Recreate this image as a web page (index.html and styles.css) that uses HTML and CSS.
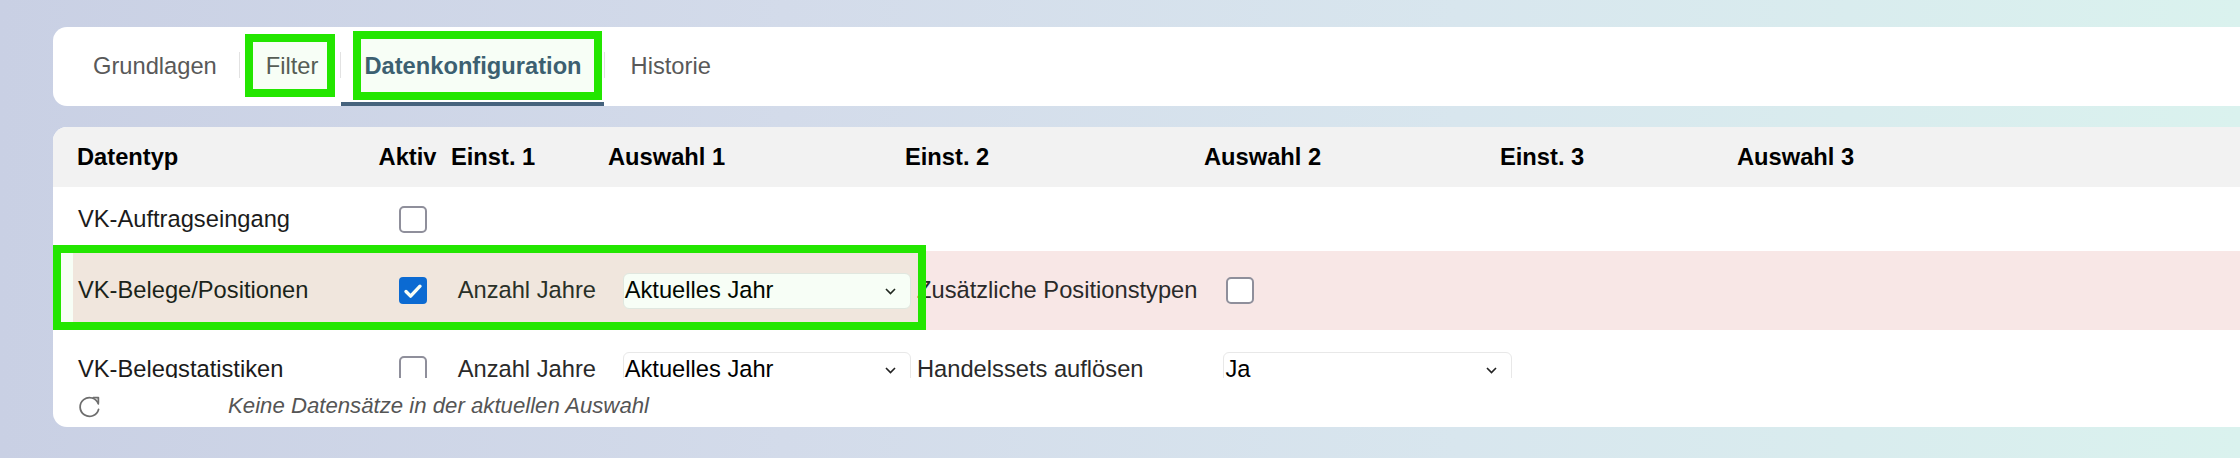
FILE: index.html
```html
<!DOCTYPE html>
<html lang="de">
<head>
<meta charset="utf-8">
<title>Datenkonfiguration</title>
<link rel="stylesheet" href="styles.css">
</head>
<body>
<div class="page">
  <div class="tabs-card">
    <div class="tab">Grundlagen</div>
    <div class="sep"></div>
    <div class="tab">Filter</div>
    <div class="sep"></div>
    <div class="tab active">Datenkonfiguration</div>
    <div class="sep"></div>
    <div class="tab">Historie</div>
    <div class="mark mark-filter"></div>
    <div class="mark mark-tab"></div>
  </div>

  <div class="table-card">
    <div class="thead">
      <div class="th">Datentyp</div>
      <div class="th">Aktiv</div>
      <div class="th">Einst. 1</div>
      <div class="th">Auswahl 1</div>
      <div class="th">Einst. 2</div>
      <div class="th">Auswahl 2</div>
      <div class="th">Einst. 3</div>
      <div class="th">Auswahl 3</div>
    </div>
    <div class="tbody">
      <div class="row row-short">
        <div class="cell name">VK-Auftragseingang</div>
        <div class="cell"><span class="cb"></span></div>
      </div>
      <div class="row row-hl">
        <div class="cell name">VK-Belege/Positionen</div>
        <div class="cell"><span class="cb checked"><svg viewBox="0 0 28 28" width="28" height="28"><path d="M7 14.5l4.6 4.6L21 9.2" fill="none" stroke="#fff" stroke-width="3.4" stroke-linecap="round" stroke-linejoin="round"/></svg></span></div>
        <div class="cell label">Anzahl Jahre</div>
        <div class="cell"><div class="select"><span>Aktuelles Jahr</span><svg class="chev" viewBox="0 0 11 7" width="11" height="7"><polyline points="1,1 5.5,5.6 10,1" fill="none" stroke="#222" stroke-width="1.6"/></svg></div></div>
        <div class="cell label">Zusätzliche Positionstypen</div>
        <div class="cell"><span class="cb cb-offset"></span></div>
      </div>
      <div class="row">
        <div class="cell name">VK-Belegstatistiken</div>
        <div class="cell"><span class="cb"></span></div>
        <div class="cell label">Anzahl Jahre</div>
        <div class="cell"><div class="select"><span>Aktuelles Jahr</span><svg class="chev" viewBox="0 0 11 7" width="11" height="7"><polyline points="1,1 5.5,5.6 10,1" fill="none" stroke="#222" stroke-width="1.6"/></svg></div></div>
        <div class="cell label">Handelssets auflösen</div>
        <div class="cell"><div class="select select-wide"><span>Ja</span><svg class="chev" viewBox="0 0 11 7" width="11" height="7"><polyline points="1,1 5.5,5.6 10,1" fill="none" stroke="#222" stroke-width="1.6"/></svg></div></div>
      </div>
    </div>
    <div class="footer">
      <svg class="refresh" viewBox="0 0 24 24" width="25" height="25"><path d="M20.46 9.42A9 9 0 1 0 20.69 14.83" fill="none" stroke="#6e6e6e" stroke-width="1.7" stroke-linecap="round"/><polyline points="15.6,3.4 20.5,3.4 20.5,8.3" fill="none" stroke="#6e6e6e" stroke-width="1.7" stroke-linecap="round" stroke-linejoin="round"/></svg>
      <span class="empty">Keine Datensätze in der aktuellen Auswahl</span>
    </div>
    <div class="mark mark-row"></div>
  </div>
</div>
</body>
</html>
```

FILE: styles.css
```css
* { box-sizing: border-box; }

html, body {
  margin: 0;
  padding: 0;
}

body {
  width: 2240px;
  height: 458px;
  overflow: hidden;
  font-family: "Liberation Sans", Arial, sans-serif;
  background: linear-gradient(90deg, #c9d0e4 0%, #d3dbea 35%, #d8e6ee 65%, #daf2ee 100%);
}

.page {
  padding: 27px 0 0 53px;
  width: 2240px;
}

/* ---------- tabs ---------- */
.tabs-card {
  position: relative;
  display: flex;
  align-items: stretch;
  height: 79px;
  margin-right: -40px;
  padding-left: 14px;
  background: #fff;
  border-radius: 14px;
}

.tab {
  display: flex;
  align-items: center;
  padding: 0 22px 0 26px;
  font-size: 23.7px;
  color: #595959;
}

.tab.active {
  padding-left: 23px;
  font-weight: bold;
  color: #3e5c76;
  box-shadow: inset 0 -4px 0 #46637d;
}

.sep {
  align-self: center;
  width: 1px;
  height: 26px;
  margin-top: -3px;
  background: #e2e2e2;
}

/* annotation boxes */
.mark {
  position: absolute;
  border: 8px solid #23e600;
  background: rgba(35, 230, 0, 0.035);
  pointer-events: none;
}

.mark-filter {
  left: 192px;
  top: 7px;
  width: 90px;
  height: 63px;
}

.mark-tab {
  left: 300px;
  top: 4px;
  width: 249px;
  height: 69px;
}

.mark-row {
  left: 0;
  top: 118px;
  width: 873px;
  height: 85px;
}

/* ---------- table ---------- */
.table-card {
  position: relative;
  margin-top: 21px;
  margin-right: -40px;
  height: 300px;
  background: #fff;
  border-radius: 14px;
  overflow: hidden;
}

.thead {
  display: grid;
  grid-template-columns: 301.6px 72.4px 157px 297px 299px 296px 237px 1fr;
  align-items: center;
  height: 60px;
  padding-left: 24px;
  background: #f2f2f2;
}

.th {
  font-size: 23.7px;
  font-weight: bold;
  color: #000;
  white-space: nowrap;
}

.tbody {
  height: 191px;
  overflow: hidden;
  padding-left: 20px;
}

.row {
  display: grid;
  grid-template-columns: 321px 58.7px 165px 294.3px 306.5px 1fr;
  align-items: center;
  height: 79px;
  padding-left: 5px;
}

.row-short {
  height: 64px;
}

.row-hl {
  background: #f8e7e6;
}

.cell {
  display: flex;
  align-items: center;
  font-size: 23.7px;
  white-space: nowrap;
}

.name {
  color: #1b1b1b;
}

.label {
  color: #2a2a2a;
}

.cb {
  display: inline-block;
  width: 28px;
  height: 27px;
  border: 2px solid #8f8f9b;
  border-radius: 5px;
  background: #fff;
}

.cb.checked {
  border: none;
  background: #0b66da;
  border-radius: 4px;
  overflow: hidden;
}

.cb.checked svg {
  display: block;
}

.cb-offset {
  margin-left: 3px;
}

.select {
  display: flex;
  align-items: center;
  justify-content: space-between;
  width: 288px;
  height: 36px;
  padding: 0 14px 0 1px;
  border: 1px solid #e8e8e8;
  border-radius: 6px;
  background: #fff;
  color: #000;
  font-size: 23.7px;
}

.select-wide {
  width: 289px;
}

.chev {
  display: block;
  margin-top: 2px;
}

/* ---------- footer ---------- */
.footer {
  display: flex;
  align-items: center;
  gap: 126px;
  height: 49px;
  padding-top: 7px;
  padding-left: 24px;
}

.refresh {
  display: block;
}

.empty {
  font-size: 22.2px;
  font-style: italic;
  color: #555;
}
```
